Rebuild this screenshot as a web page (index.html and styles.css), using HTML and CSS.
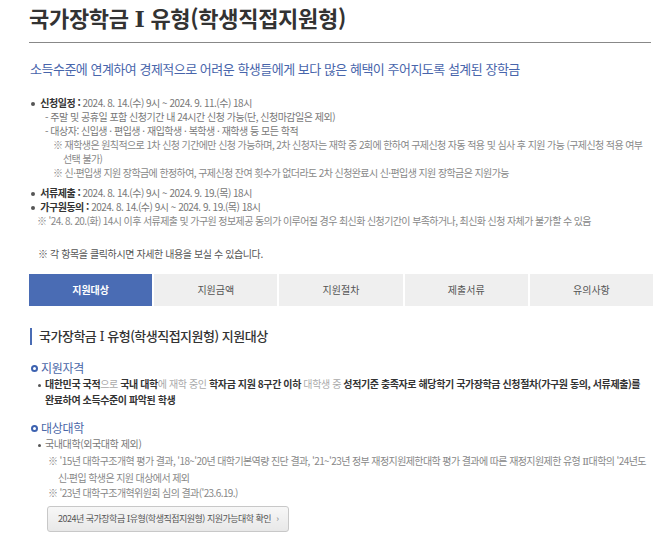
FILE: index.html
```html
<!DOCTYPE html>
<html lang="ko">

<head>
    <meta charset="UTF-8">
    <meta name="viewport" content="width=device-width, initial-scale=1.0">
    <title>국가장학금 Ⅰ 유형(학생직접지원형)</title>
    <link rel="stylesheet" href="styles.css">
</head>

<body>
    <div class="page">
        <h1 class="title">국가장학금 <span class="roman">Ⅰ</span> 유형(학생직접지원형)</h1>
        <p class="lead">소득수준에 연계하여 경제적으로 어려운 학생들에게 보다 많은 혜택이 주어지도록 설계된 장학금</p>

        <ul class="schedule">
            <li class="item">
                <strong>신청일정 :</strong> 2024. 8. 14.(수) 9시 ~ 2024. 9. 11.(수) 18시
                <ul class="dash">
                    <li>주말 및 공휴일 포함 신청기간 내 24시간 신청 가능(단, 신청마감일은 제외)</li>
                    <li>대상자: 신입생 · 편입생 · 재입학생 · 복학생 · 재학생 등 모든 학적</li>
                </ul>
                <p class="note">※ 재학생은 원칙적으로 1차 신청 기간에만 신청 가능하며, 2차 신청자는 재학 중 2회에 한하여 구제신청 자동 적용 및 심사 후 지원 가능 (구제신청 적용 여부 선택 불가)</p>
                <p class="note">※ 신·편입생 지원 장학금에 한정하여, 구제신청 잔여 횟수가 없더라도 2차 신청완료시 신·편입생 지원 장학금은 지원가능</p>
            </li>
            <li class="item gap">
                <strong>서류제출 :</strong> 2024. 8. 14.(수) 9시 ~ 2024. 9. 19.(목) 18시
            </li>
            <li class="item">
                <strong>가구원동의 :</strong> 2024. 8. 14.(수) 9시 ~ 2024. 9. 19.(목) 18시
                <p class="note note-flat">※ '24. 8. 20.(화) 14시 이후 서류제출 및 가구원 정보제공 동의가 이루어질 경우 최신화 신청기간이 부족하거나, 최신화 신청 자체가 불가할 수 있음</p>
            </li>
        </ul>

        <p class="hint">※ 각 항목을 클릭하시면 자세한 내용을 보실 수 있습니다.</p>

        <nav class="tabs">
            <a class="tab active" href="#">지원대상</a>
            <a class="tab" href="#">지원금액</a>
            <a class="tab" href="#">지원절차</a>
            <a class="tab" href="#">제출서류</a>
            <a class="tab" href="#">유의사항</a>
        </nav>

        <h2 class="section-title">국가장학금 <span class="roman">Ⅰ</span> 유형(학생직접지원형) 지원대상</h2>

        <h3 class="sub-title">지원자격</h3>
        <ul class="points">
            <li class="strong-list">대한민국 국적<span class="light">으로</span> 국내 대학<span class="light">에 재학 중인</span> 학자금 지원 8구간 이하 <span class="light">대학생 중</span> 성적기준 충족자로 해당학기 국가장학금 신청절차(가구원 동의, 서류제출)를<br>완료하여 소득수준이 파악된 학생</li>
        </ul>

        <h3 class="sub-title">대상대학</h3>
        <ul class="points">
            <li>국내대학(외국대학 제외)</li>
        </ul>
        <p class="note note-sub">※ '15년 대학구조개혁 평가 결과, '18~'20년 대학기본역량 진단 결과, '21~'23년 정부 재정지원제한대학 평가 결과에 따른 재정지원제한 유형 <span class="roman">Ⅱ</span>대학의 '24년도<br>신·편입 학생은 지원 대상에서 제외</p>
        <p class="note note-sub">※ '23년 대학구조개혁위원회 심의 결과('23.6.19.)</p>

        <a class="check-btn" href="#">2024년 국가장학금 <span class="roman">Ⅰ</span>유형(학생직접지원형) 지원가능대학 확인 <span class="arrow">›</span></a>
    </div>
</body>

</html>
```

FILE: styles.css
```css
body {
    margin: 0;
    font-family: "Noto Sans CJK KR", "Noto Sans", sans-serif;
    color: #777;
    background-color: #ffffff;
    word-break: keep-all;
}

.page {
    padding: 2px 3px 0 29px;
}

.roman {
    font-family: "DejaVu Serif", "Liberation Serif", serif;
    font-weight: 400;
}

.title {
    margin: 0 2px 0 0;
    padding-bottom: 8px;
    font-size: 22px;
    line-height: 30px;
    font-weight: 700;
    letter-spacing: -0.3px;
    color: #333;
    border-bottom: 1px solid #888;
}

.title .roman {
    font-weight: 700;
}

.lead {
    margin: 17px 0 0 1px;
    font-size: 13px;
    line-height: 18px;
    letter-spacing: -0.5px;
    color: #4865ab;
}

.schedule,
.dash,
.points {
    list-style: none;
    margin: 0;
    padding: 0;
}

.schedule {
    margin-top: 18px;
    font-size: 10px;
    line-height: 14px;
    letter-spacing: -0.5px;
}

.schedule strong {
    color: #333;
}

.item {
    padding-left: 2px;
}

.item::before {
    content: "";
    display: inline-block;
    width: 4px;
    height: 4px;
    margin-right: 3px;
    border-radius: 50%;
    background-color: #555;
    vertical-align: middle;
}

.item.gap {
    margin-top: 6px;
}

.dash {
    margin-left: 14px;
}

.dash li::before {
    content: "- ";
}

.note {
    margin: 0 0 0 22px;
    padding-left: 10px;
    text-indent: -10px;
    font-size: 10px;
    line-height: 14px;
    letter-spacing: -0.6px;
    color: #888;
}

.note-flat {
    margin: 0 0 0 6px;
}

.hint {
    margin: 19px 0 0 9px;
    font-size: 10px;
    line-height: 14px;
    letter-spacing: -0.4px;
    color: #555;
}

.tabs {
    display: grid;
    grid-template-columns: repeat(5, 1fr);
    gap: 2px;
    margin-top: 13px;
}

.tab {
    height: 32px;
    line-height: 32px;
    text-align: center;
    font-size: 10px;
    color: #555;
    text-decoration: none;
    background-color: #efefef;
}

.tab.active {
    background-color: #4a6cb4;
    color: #fff;
    font-weight: 700;
}

.section-title {
    margin: 22px 0 0 1px;
    padding-left: 7px;
    border-left: 2px solid #4a6cb4;
    font-size: 13px;
    line-height: 16px;
    font-weight: 500;
    letter-spacing: -0.5px;
    color: #333;
}

.sub-title {
    margin: 15px 0 0 2px;
    font-size: 12px;
    line-height: 16px;
    font-weight: 400;
    letter-spacing: -0.3px;
    color: #4b68a8;
}

.points + .sub-title {
    margin-top: 12px;
}

.sub-title::before {
    content: "";
    display: inline-block;
    width: 3px;
    height: 3px;
    margin-right: 3px;
    border: 2px solid #3d62b0;
    border-radius: 50%;
    vertical-align: 1px;
}

.points {
    margin-left: 9px;
    font-size: 10px;
    line-height: 16px;
    letter-spacing: -0.4px;
}

.points li {
    padding-left: 7px;
    text-indent: -7px;
}

.points li::before {
    content: "";
    display: inline-block;
    width: 3px;
    height: 3px;
    margin-right: 4px;
    border-radius: 50%;
    background-color: #555;
    vertical-align: middle;
}

.strong-list {
    font-weight: 700;
    color: #333;
}

.strong-list .light {
    font-weight: 400;
    color: #aaa;
}

.note-sub {
    margin-left: 19px;
    line-height: 15.5px;
}

.sub-title + .points + .note-sub {
    margin-top: 1px;
}

.check-btn {
    display: block;
    width: max-content;
    margin: 5px 0 0 18px;
    padding: 0 10px;
    height: 24px;
    line-height: 24px;
    font-size: 9px;
    letter-spacing: -0.5px;
    color: #555;
    text-decoration: none;
    background: linear-gradient(#f7f7f7, #e8e8e8);
    border: 1px solid #c8c8c8;
    border-radius: 3px;
}

.check-btn .arrow {
    margin-left: 3px;
    color: #888;
}
```
